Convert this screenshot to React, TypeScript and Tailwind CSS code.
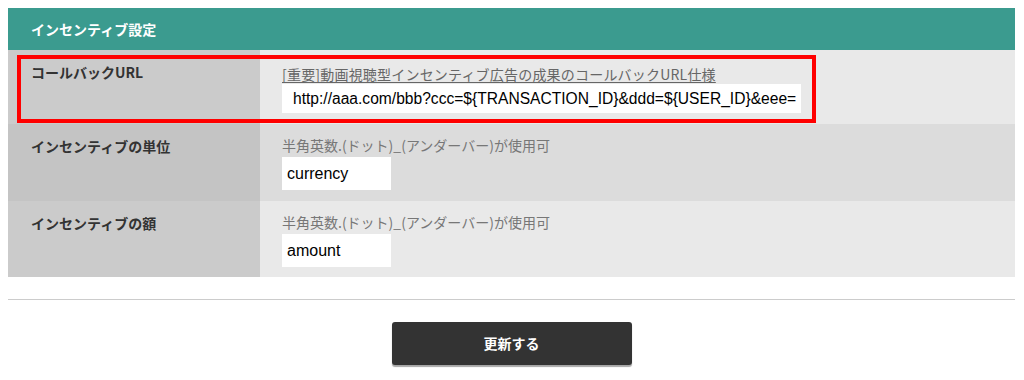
import React from "react";

const jp = "font-['Hiragino_Kaku_Gothic_ProN','Noto_Sans_CJK_JP',sans-serif]";

function Row({
  label,
  odd,
  children,
  highlight,
}: {
  label: string;
  odd: boolean;
  children: React.ReactNode;
  highlight?: boolean;
}) {
  return (
    <div className="relative flex">
      <div
        className={`w-[252px] shrink-0 px-[23px] pt-[12px] text-[14px] font-bold leading-[20px] text-[#333] ${
          odd ? "bg-[#cbcbcb]" : "bg-[#c4c4c4]"
        }`}
      >
        {label}
      </div>
      <div className={`flex-1 pl-[22px] ${odd ? "bg-[#e9e9e9]" : "bg-[#dcdcdc]"}`}>{children}</div>
      {/* red annotation box drawn over the first row */}
      {highlight && (
        <div className="pointer-events-none absolute top-[5px] bottom-[1px] left-[9px] right-[199px] border-[4px] border-[#ff0000]" />
      )}
    </div>
  );
}

export default function App() {
  return (
    <div className={`min-h-[380px] bg-white pt-2 pl-2 ${jp}`}>
      <div className="w-[1007px]">
        <div className="flex h-[42px] items-center bg-[#3b9b8f] px-[23px] text-[14px] font-bold text-white">
          インセンティブ設定
        </div>

        <Row label="コールバックURL" odd highlight>
          <div className="pt-[14px] pb-[11px]">
            <a
              href="#"
              className="block text-[14px] leading-[20px] tracking-[0.2px] text-[#666] underline underline-offset-2"
            >
              [重要]動画視聴型インセンティブ広告の成果のコールバックURL仕様
            </a>
            <div className="flex h-[29px] w-[519px] items-center overflow-hidden bg-white pl-[11px] font-['Liberation_Sans',Arial,sans-serif] text-[15.6px] text-black">
              <span className="whitespace-nowrap">
                {"http://aaa.com/bbb?ccc=${TRANSACTION_ID}&ddd=${USER_ID}&eee="}
              </span>
            </div>
          </div>
        </Row>

        <Row label="インセンティブの単位" odd={false}>
          <div className="pt-[11px] pb-[11px]">
            <div className="text-[14px] leading-[20px] text-[#777]">半角英数.(ドット)_(アンダーバー)が使用可</div>
            <div className="mt-[2px] flex h-[33px] w-[109px] items-center bg-white pl-[5px] font-['Liberation_Sans',Arial,sans-serif] text-[16px] text-black">
              currency
            </div>
          </div>
        </Row>

        <Row label="インセンティブの額" odd>
          <div className="pt-[11px] pb-[10px]">
            <div className="text-[14px] leading-[20px] text-[#777]">半角英数.(ドット)_(アンダーバー)が使用可</div>
            <div className="mt-[2px] flex h-[33px] w-[109px] items-center bg-white pl-[5px] font-['Liberation_Sans',Arial,sans-serif] text-[16px] text-black">
              amount
            </div>
          </div>
        </Row>

        <div className="mt-[22px] h-px bg-[#cccccc]" />

        <div className="flex justify-center pt-[22px]">
          <button
            type="button"
            className="h-[43px] w-[240px] rounded-[3px] bg-[#333] text-[14px] font-bold text-white shadow-[0_2px_1px_rgba(0,0,0,0.35)]"
          >
            更新する
          </button>
        </div>
      </div>
    </div>
  );
}
